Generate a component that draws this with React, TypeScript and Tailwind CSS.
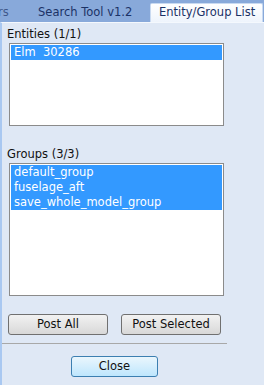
import React from "react";

const entities = ["Elm  30286"];
const groups = ["default_group", "fuselage_aft", "save_whole_model_group"];

function ListBox({ items, height }: { items: string[]; height: string }) {
  return (
    <div className={`mx-[7px] w-[215px] ${height} border border-[#8b8b8b] bg-white p-[1px]`}>
      {items.map((it) => (
        <div key={it} className="h-[15px] bg-[#3399ff] pl-[3px] text-white leading-[15px] whitespace-pre">
          {it}
        </div>
      ))}
    </div>
  );
}

function Btn({ label, focused, className }: { label: string; focused?: boolean; className?: string }) {
  return (
    <button
      className={`h-[21px] rounded-[3px] border bg-gradient-to-b text-[#111] leading-none ${
        focused
          ? "border-[#3c7fb1] from-[#eaf6fd] to-[#bee6fd]"
          : "border-[#707070] from-[#f2f2f2] to-[#d8d8d8]"
      } ${className ?? ""}`}
    >
      {label}
    </button>
  );
}

export default function App() {
  return (
    <div
      className="w-[264px] h-[385px] overflow-hidden bg-[#dfe8f5] text-[11.5px] text-black"
      style={{ fontFamily: "'DejaVu Sans', Verdana, sans-serif" }}
    >
      {/* tab strip */}
      <div className="flex h-[22px] items-end bg-[#88a9da] text-[#1b3266]">
        <div className="w-[150px] h-[19px] flex items-center">
          <span className="ml-[-2px] w-[32px] text-[#1b3266]/70">rs</span>
          <span className="ml-[8px]">Search Tool v1.2</span>
        </div>
        <div className="flex h-[19px] w-[113px] items-center rounded-t-[2px] border border-b-0 border-[#c9daf1] bg-gradient-to-b from-white to-[#eef4fc] pl-[8px]">
          Entity/Group List
        </div>
      </div>

      <div className="h-[363px] border-l-2 border-[#a9c8f1] border-t border-t-[#f4f8fd]">
        <div className="pl-[5px] pt-[5px] h-[20px] leading-[13px] text-[#111]">Entities (1/1)</div>
        <ListBox items={entities} height="h-[83px]" />
        <div className="pl-[5px] pt-[22px] h-[37px] leading-[13px] text-[#111]">Groups (3/3)</div>
        <ListBox items={groups} height="h-[133px]" />

        <div className="mt-[18px] flex gap-[13px] pl-[6px]">
          <Btn label="Post All" className="w-[100px]" />
          <Btn label="Post Selected" className="w-[100px]" />
        </div>
        <div className="mt-[8px] w-[225px] border-t border-[#a8a8a8]" />
        <div className="mt-[12px] pl-[69px]">
          <Btn label="Close" focused className="w-[87px]" />
        </div>
      </div>
    </div>
  );
}
